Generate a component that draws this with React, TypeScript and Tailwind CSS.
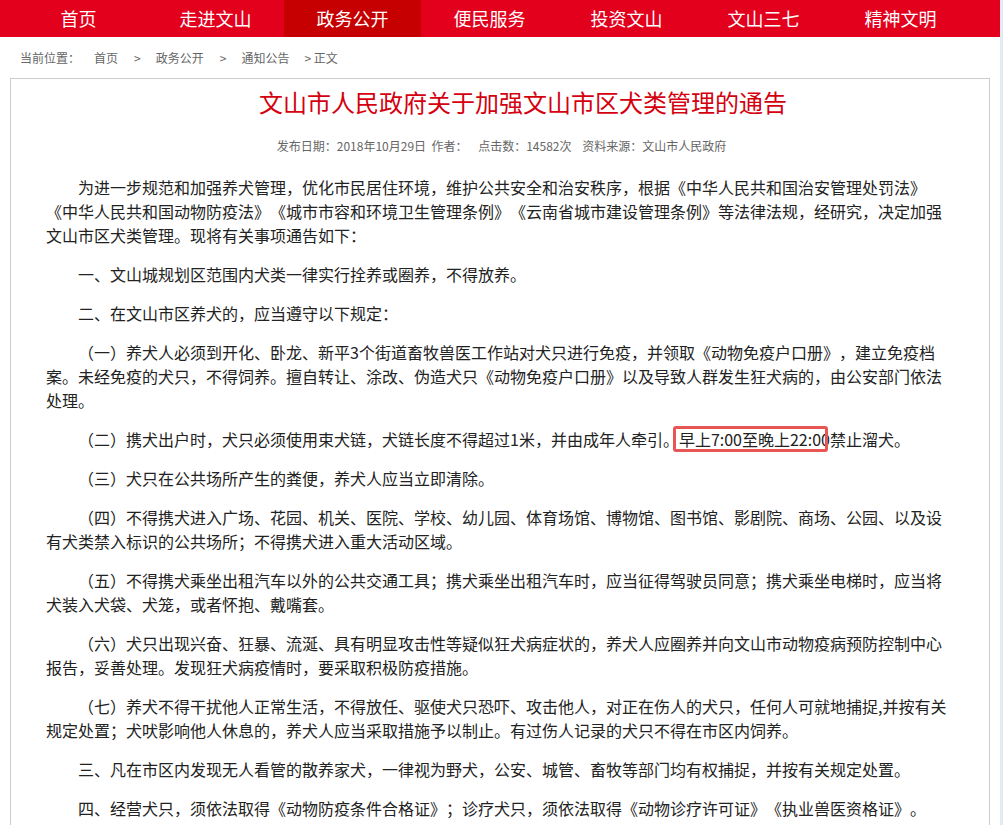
import React from 'react';

const navItems = ['首页', '走进文山', '政务公开', '便民服务', '投资文山', '文山三七', '精神文明'];

const Mark: React.FC<{ children: React.ReactNode }> = ({ children }) => (
  <span className="relative">
    {children}
    <span className="absolute -left-[6px] right-[2px] -top-[1px] -bottom-[1px] rounded-[3px] border-[3px] border-[#e85555]"></span>
  </span>
);

const App: React.FC = () => {
  return (
    <div className="flex min-h-screen bg-white font-['Noto_Sans_CJK_SC',sans-serif] [text-spacing-trim:space-all]">
      <div className="w-[1000px] shrink-0">
        {/* top nav */}
        <div className="h-[37px] bg-[#e2001d]">
          <ul className="ml-[10px] flex h-full w-[980px]">
            {navItems.map((item) => (
              <li
                key={item}
                className={
                  'flex w-[137px] items-center justify-center text-[18px] text-white ' +
                  (item === '政务公开' ? 'bg-[#c60000]' : '')
                }
              >
                {item}
              </li>
            ))}
          </ul>
        </div>

        {/* breadcrumb */}
        <div className="flex h-[41px] items-center pl-[20px] text-[12px] text-[#666]">
          <span>当前位置：</span>
          <span className="ml-[14px]">首页</span>
          <span className="ml-[16px]">&gt;</span>
          <span className="ml-[15px]">政务公开</span>
          <span className="ml-[16px]">&gt;</span>
          <span className="ml-[15px]">通知公告</span>
          <span className="ml-[15px]">&gt; 正文</span>
        </div>

        {/* article */}
        <div className="ml-[10px] w-[980px] border border-[#ccc] pb-[20px] pl-[35px] pr-[20px] pt-[5px]">
          <h1 className="pl-[31px] text-center text-[24px] leading-[36px] font-normal text-[#d4000f]">
            文山市人民政府关于加强文山市区犬类管理的通告
          </h1>
          <div className="mt-[16px] pr-[12px] text-center text-[12px] leading-[20px] text-[#666]">
            发布日期：2018年10月29日&nbsp;&nbsp;作者：&nbsp;&nbsp;&nbsp;&nbsp;点击数：14582次&nbsp;&nbsp;&nbsp;&nbsp;资料来源：文山市人民政府
          </div>

          <div className="mt-[19px] space-y-[15px] text-[16px] leading-[24px] text-[#222] [&>p]:indent-[32px]">
            <p>
              为进一步规范和加强养犬管理，优化市民居住环境，维护公共安全和治安秩序，根据《中华人民共和国治安管理处罚法》<br />
              《中华人民共和国动物防疫法》《城市市容和环境卫生管理条例》《云南省城市建设管理条例》等法律法规，经研究，决定加强<br />
              文山市区犬类管理。现将有关事项通告如下：
            </p>
            <p>一、文山城规划区范围内犬类一律实行拴养或圈养，不得放养。</p>
            <p>二、在文山市区养犬的，应当遵守以下规定：</p>
            <p>
              （一）养犬人必须到开化、卧龙、新平3个街道畜牧兽医工作站对犬只进行免疫，并领取《动物免疫户口册》，建立免疫档<br />
              案。未经免疫的犬只，不得饲养。擅自转让、涂改、伪造犬只《动物免疫户口册》以及导致人群发生狂犬病的，由公安部门依法<br />
              处理。
            </p>
            <p>
              （二）携犬出户时，犬只必须使用束犬链，犬链长度不得超过1米，并由成年人牵引。<Mark>早上7:00至晚上22:00</Mark>禁止溜犬。
            </p>
            <p>（三）犬只在公共场所产生的粪便，养犬人应当立即清除。</p>
            <p>
              （四）不得携犬进入广场、花园、机关、医院、学校、幼儿园、体育场馆、博物馆、图书馆、影剧院、商场、公园、以及设<br />
              有犬类禁入标识的公共场所；不得携犬进入重大活动区域。
            </p>
            <p>
              （五）不得携犬乘坐出租汽车以外的公共交通工具；携犬乘坐出租汽车时，应当征得驾驶员同意；携犬乘坐电梯时，应当将<br />
              犬装入犬袋、犬笼，或者怀抱、戴嘴套。
            </p>
            <p>
              （六）犬只出现兴奋、狂暴、流涎、具有明显攻击性等疑似狂犬病症状的，养犬人应圈养并向文山市动物疫病预防控制中心<br />
              报告，妥善处理。发现狂犬病疫情时，要采取积极防疫措施。
            </p>
            <p>
              （七）养犬不得干扰他人正常生活，不得放任、驱使犬只恐吓、攻击他人，对正在伤人的犬只，任何人可就地捕捉,并按有关<br />
              规定处置；犬吠影响他人休息的，养犬人应当采取措施予以制止。有过伤人记录的犬只不得在市区内饲养。
            </p>
            <p>三、凡在市区内发现无人看管的散养家犬，一律视为野犬，公安、城管、畜牧等部门均有权捕捉，并按有关规定处置。</p>
            <p>四、经营犬只，须依法取得《动物防疫条件合格证》；诊疗犬只，须依法取得《动物诊疗许可证》《执业兽医资格证》。</p>
          </div>
        </div>
      </div>
      <div className="flex-1 bg-[#e3eaf4]"></div>
    </div>
  );
};

export default App;
